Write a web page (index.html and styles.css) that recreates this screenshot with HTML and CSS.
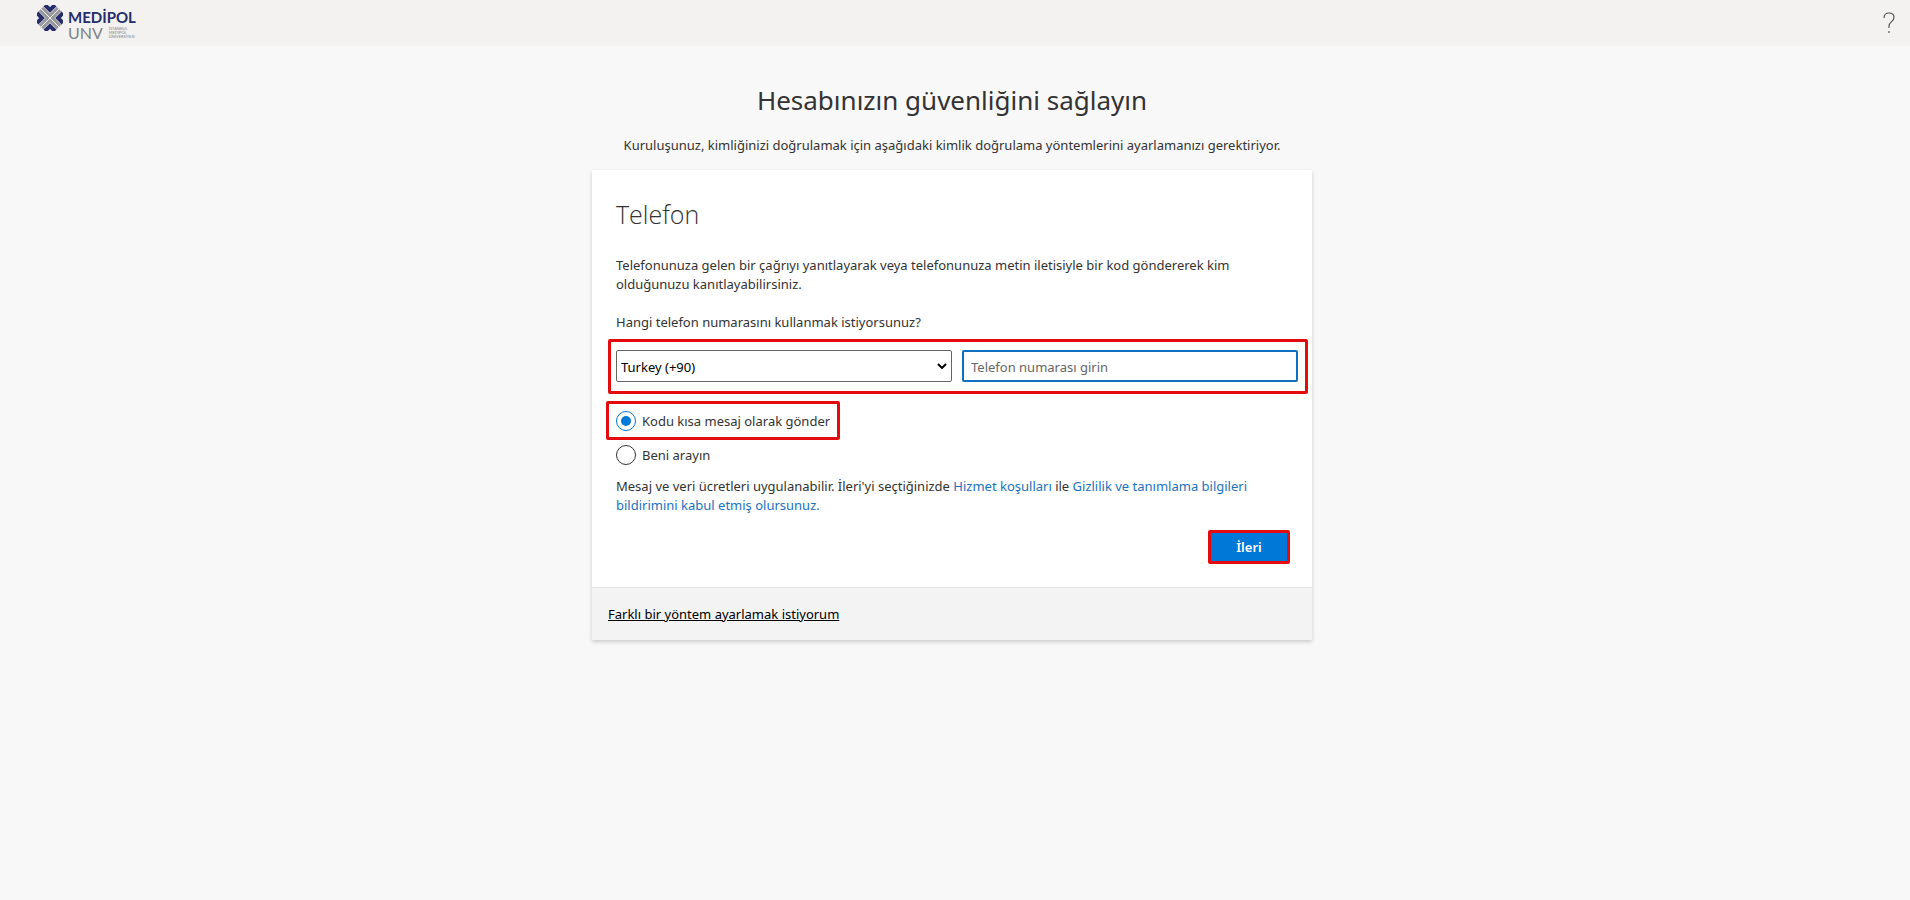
FILE: index.html
```html
<!DOCTYPE html>
<html lang="tr">
<head>
    <meta charset="UTF-8">
    <meta name="viewport" content="width=device-width, initial-scale=1.0">
    <title>Hesabınızın güvenliğini sağlayın</title>
    <link rel="stylesheet" href="styles.css">
</head>
<body>
    <header class="header">
        <div class="logo">
            <svg class="logo-mark" viewBox="0 0 26 26" aria-hidden="true">
                <path d="M4 4l18 18M22 4L4 22" fill="none" stroke="#96989b" stroke-width="8"/>
                <path d="M4 4l18 18M22 4L4 22" fill="none" stroke="#f3f2f1" stroke-width="1"/>
                <path d="M8 0l5 5 5-5M8 26l5-5 5 5M0 8l5 5-5 5M26 8l-5 5 5 5" fill="none" stroke="#f3f2f1" stroke-width="5"/>
                <path d="M8 0l5 5 5-5M8 26l5-5 5 5M0 8l5 5-5 5M26 8l-5 5 5 5" fill="none" stroke="#252d6b" stroke-width="4"/>
            </svg>
            <div class="logo-text">
                <span class="logo-name">MEDİPOL</span>
                <div class="logo-row">
                    <span class="logo-unv">UNV</span>
                    <span class="logo-small">İSTANBUL<br>MEDİPOL<br>ÜNİVERSİTESİ</span>
                </div>
            </div>
        </div>
        <button class="help-button" type="button" aria-label="Yardım">
            <svg viewBox="0 0 12 22" width="12" height="22" fill="none" stroke="#555" stroke-width="1.2">
                <path d="M1 6C1 2.800 3 1 6 1s5 1.800 5 4.500C11 9.500 6 9.800 6 14v2"/>
                <path d="M6 19v2"/>
            </svg>
        </button>
    </header>

    <main class="content">
        <h1 class="title">Hesabınızın güvenliğini sağlayın</h1>
        <p class="subtitle">Kuruluşunuz, kimliğinizi doğrulamak için aşağıdaki kimlik doğrulama yöntemlerini ayarlamanızı gerektiriyor.</p>

        <form class="card">
            <div class="card-body">
                <h2 class="card-title">Telefon</h2>
                <p class="text">Telefonunuza gelen bir çağrıyı yanıtlayarak veya telefonunuza metin iletisiyle bir kod göndererek kim olduğunuzu kanıtlayabilirsiniz.</p>
                <label class="question" for="phone">Hangi telefon numarasını kullanmak istiyorsunuz?</label>

                <div class="phone-row">
                    <div class="select-wrap">
                        <select class="field country" aria-label="Ülke kodu">
                            <option>Turkey (+90)</option>
                        </select>
                        <svg class="arrow" viewBox="0 0 10 6" width="10" height="6" fill="none" stroke="#000" stroke-width="2">
                            <path d="M1 1l4 4 4-4"/>
                        </svg>
                    </div>
                    <input class="field phone" id="phone" type="tel" placeholder="Telefon numarası girin">
                </div>

                <div class="options">
                    <label class="option marked"><input type="radio" name="method" checked>Kodu kısa mesaj olarak gönder</label>
                    <label class="option"><input type="radio" name="method">Beni arayın</label>
                </div>

                <p class="text terms">Mesaj ve veri ücretleri uygulanabilir. İleri'yi seçtiğinizde <a href="#">Hizmet koşulları</a> ile <a href="#">Gizlilik ve tanımlama bilgileri bildirimini kabul etmiş olursunuz.</a></p>

                <div class="actions">
                    <button class="next-button" type="submit">İleri</button>
                </div>
            </div>
            <div class="card-footer">
                <a href="#">Farklı bir yöntem ayarlamak istiyorum</a>
            </div>
        </form>
    </main>
</body>
</html>
```
FILE: styles.css
```css
* {
    box-sizing: border-box;
}
body {
    margin: 0;
    font-family: "Noto Sans", "Open Sans", sans-serif;
    font-size: 13px;
    line-height: 19px;
    background-color: #f8f8f8;
    color: #333;
}
h1, h2, p {
    margin: 0;
}

/* Header */
.header {
    display: flex;
    justify-content: space-between;
    align-items: center;
    height: 46px;
    padding: 0 15px 0 37px;
    background-color: #f3f2f1;
}
.logo {
    display: flex;
    align-items: flex-start;
    gap: 5px;
    height: 36px;
}
.logo-mark {
    width: 26px;
    height: 26px;
}
.logo-text {
    display: flex;
    flex-direction: column;
    padding-top: 4px;
    font-family: Lato, sans-serif;
}
.logo-name {
    font-size: 15px;
    font-weight: bold;
    line-height: 16px;
    color: #252d6b;
}
.logo-row {
    display: flex;
    align-items: center;
    gap: 6px;
}
.logo-unv {
    font-size: 16px;
    line-height: 16px;
    color: #808285;
}
.logo-small {
    font-size: 4px;
    line-height: 4px;
    color: #808285;
}
.help-button {
    display: flex;
    padding: 0;
    border: none;
    background: none;
    cursor: pointer;
}

/* Page content */
.content {
    display: flex;
    flex-direction: column;
    align-items: center;
    padding: 34px 6px 20px 0;
}
.title {
    font-size: 26px;
    font-weight: normal;
    line-height: 40px;
}
.subtitle {
    margin: 16px 0 15px;
}
.card {
    width: 100%;
    max-width: 720px;
    background-color: #fff;
    box-shadow: 0 2px 4px rgba(0, 0, 0, 0.18);
}
.card-body {
    padding: 24px 24px 23px;
}
.card-title {
    margin-bottom: 22px;
    font-family: "Open Sans", sans-serif;
    font-size: 25px;
    font-weight: 300;
    line-height: 40px;
}
.text {
    max-width: 650px;
}
.question {
    display: block;
    margin: 19px 0 7px;
}

/* Phone number */
.phone-row {
    display: grid;
    grid-template-columns: 1fr 1fr;
    gap: 10px;
    margin: 0 -20px 0 -8px;
    padding: 8px 7px 9px 5px;
    border: 3px solid #e30b0e;
    border-radius: 2px;
}
.select-wrap {
    position: relative;
}
.field {
    width: 100%;
    height: 32px;
    border: 1px solid #666;
    border-radius: 2px;
    background-color: #fff;
    font-family: inherit;
    font-size: 13px;
}
.country {
    appearance: none;
    padding: 2px 4px 0;
    color: #000;
}
.arrow {
    position: absolute;
    right: 5px;
    top: 13px;
    pointer-events: none;
}
.phone {
    padding: 2px 7px 0;
    border: 2px solid #0f6fc1;
    outline: none;
}
.phone::placeholder {
    color: #666;
}

/* Radio options */
.options {
    display: flex;
    flex-direction: column;
    align-items: flex-start;
    margin: 7px 0 7px -10px;
}
.option {
    display: flex;
    align-items: center;
    gap: 6px;
    padding: 5px 10px;
}
.option input {
    appearance: none;
    width: 20px;
    height: 20px;
    margin: 0;
    border: 1px solid #333;
    border-radius: 50%;
}
.option input:checked {
    padding: 4px;
    border-color: #0078d7;
    background-color: #0078d7;
    background-clip: content-box;
}
.marked {
    padding: 7px 7px 6px;
    border: 3px solid #e30b0e;
    border-radius: 2px;
}
.terms a {
    color: #1a73c0;
    text-decoration: none;
}
.actions {
    display: flex;
    justify-content: flex-end;
    margin-top: 15px;
}
.next-button {
    width: 82px;
    height: 34px;
    margin-right: -2px;
    padding: 0;
    border: 3px solid #e30b0e;
    border-radius: 2px;
    background-color: #0078d7;
    color: #fff;
    font-family: inherit;
    font-size: 13px;
    font-weight: 600;
    cursor: pointer;
}
.card-footer {
    padding: 17px 16px 16px;
    border-top: 1px solid #e3e3e3;
    background-color: #f3f3f3;
}
.card-footer a {
    color: #000;
}
```
